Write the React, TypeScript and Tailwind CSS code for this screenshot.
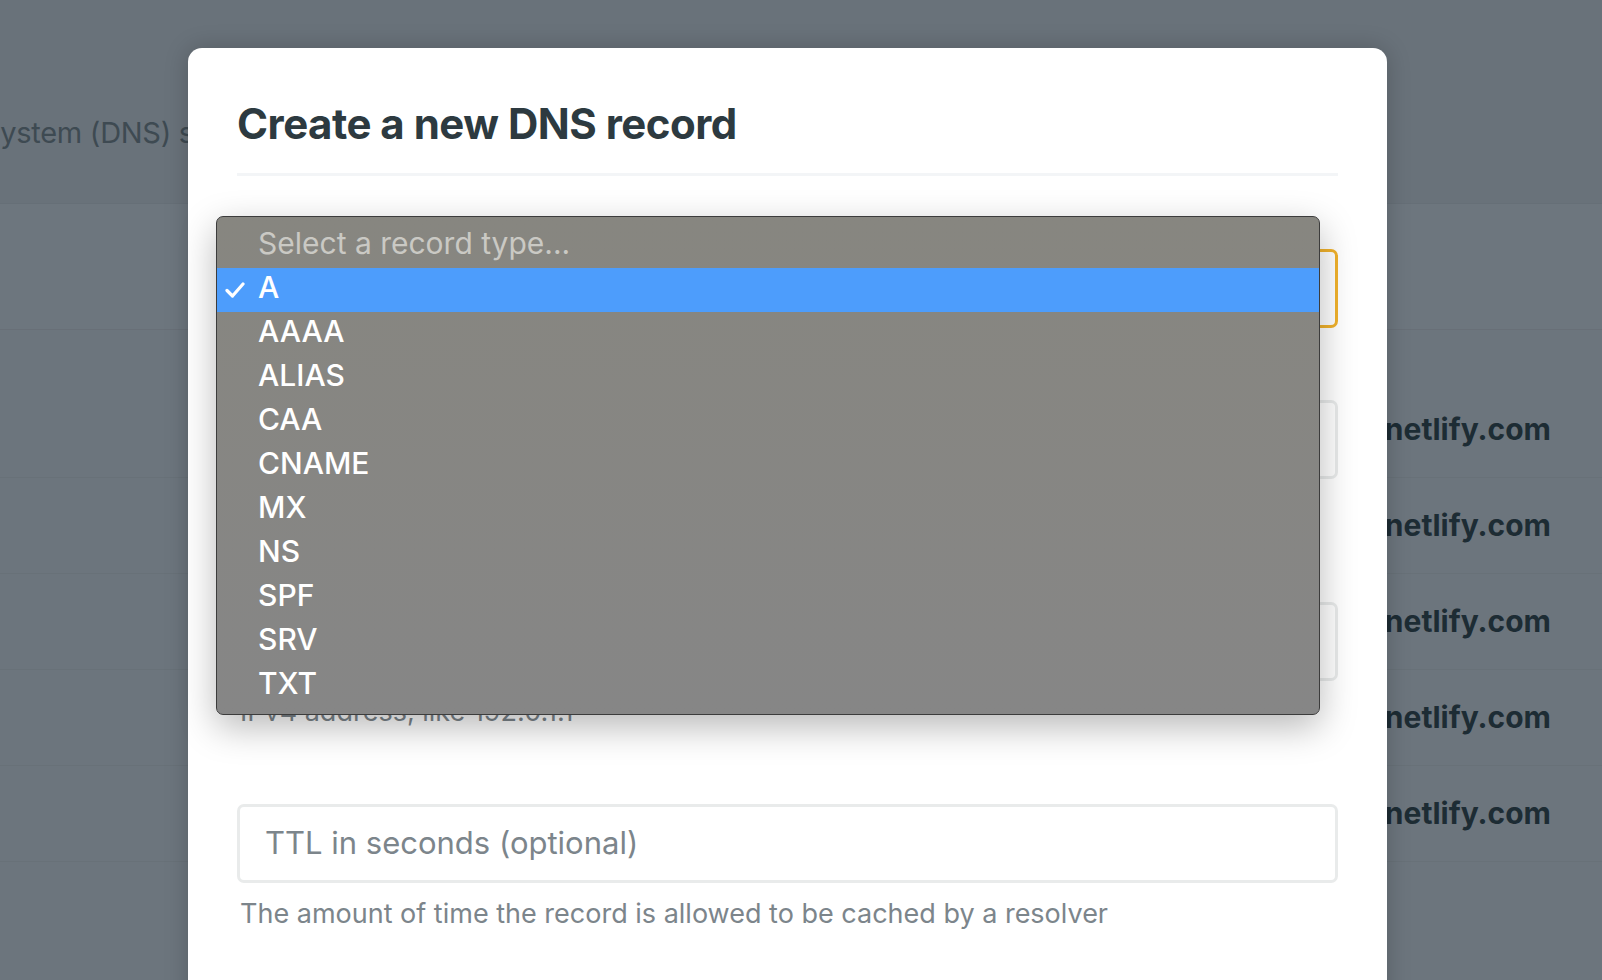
import React from "react";

const recordTypes = ["A", "AAAA", "ALIAS", "CAA", "CNAME", "MX", "NS", "SPF", "SRV", "TXT"];

const rows = [0, 1, 2, 3, 4];

function Check() {
  return (
    <svg width="20" height="16" viewBox="0 0 20 16" fill="none">
      <path d="M2 8.5 L7.5 14 L18 2" stroke="white" strokeWidth="3.2" strokeLinecap="round" strokeLinejoin="round" />
    </svg>
  );
}

function Field({
  placeholder,
  help,
  focused,
}: {
  placeholder: string;
  help?: string;
  focused?: boolean;
}) {
  return (
    <div>
      <div
        className={
          focused
            ? "h-[79px] rounded-[7px] border-[3px] border-[#f1b22c] bg-white flex items-center pl-[25px]"
            : "h-[79px] rounded-[7px] border-[3px] border-[#e9ebeb] bg-white flex items-center pl-[25px]"
        }
      >
        <span className="text-[31px] text-[#7c858b]">{placeholder}</span>
      </div>
      {help && (
        <p className="mt-[15px] pl-[3px] text-[27px] leading-[32px] text-[#7c858b]">{help}</p>
      )}
    </div>
  );
}

export default function App() {
  return (
    <div className="relative h-[980px] w-[1602px] overflow-hidden bg-[#6c757d] font-['Inter',sans-serif]">
      {/* page behind the overlay */}
      <div className="h-[203px] bg-[#69727a] pt-[114px]">
        <p className="-ml-[18px] text-[29px] leading-[38px] tracking-[-0.01em] text-[#3e4a52] whitespace-nowrap">
          System (DNS) settings for your domain are managed here.
        </p>
      </div>
      <div className="h-[126px] border-t border-[#666f77] bg-[#6d767e]" />
      <div className="border-t border-[#686f77] pt-[52px]">
        {rows.map((i) => (
          <div
            key={i}
            className="h-[96px] border-b border-[#687178] flex items-center justify-end pr-[51px]"
          >
            <span className="text-[30px] font-bold text-[#1d2c34]">
              wonderful-hopper-4a7c1e.netlify.com
            </span>
          </div>
        ))}
      </div>

      {/* modal */}
      <div className="absolute left-[188px] top-[48px] h-[980px] w-[1199px] rounded-[14px] bg-white px-[49px] shadow-[0_0_24px_rgba(0,0,0,0.2)]">
        <h1 className="pt-[50px] text-[42px] font-bold leading-[52px] tracking-[-0.012em] text-[#2d3a40]">
          Create a new DNS record
        </h1>
        <div className="mt-[23px] h-[3px] bg-[#f3f5f7]" />

        <div className="mt-[73px]">
          <div className="mb-[72px]">
            <Field placeholder="A" focused />
          </div>
          <div className="mb-[76px]">
            <Field placeholder="Name" help="Enter @ or leave blank to create a record for the root domain" />
          </div>
          <div className="mb-[76px]">
            <Field placeholder="Value" help="IPv4 address, like 192.0.1.1" />
          </div>
          <Field
            placeholder="TTL in seconds (optional)"
            help="The amount of time the record is allowed to be cached by a resolver"
          />
        </div>

        {/* native select popup */}
        <div className="absolute left-[28px] top-[168px] w-[1104px] rounded-[7px] border border-[#3c3c3c] bg-gradient-to-b from-[#878680] to-[#868686] pt-[7px] pb-[6px] shadow-[0_12px_36px_rgba(0,0,0,0.28)]">
          <div className="flex h-[44px] items-center pb-[6px] pl-[41px] text-[30px] text-[#cac9c4]">
            Select a record type...
          </div>
          {recordTypes.map((t) => (
            <div
              key={t}
              className={
                t === "A"
                  ? "relative flex h-[44px] items-center bg-[#4d9dfc] pb-[6px] pl-[41px] text-[30px] font-medium text-white"
                  : "relative flex h-[44px] items-center pb-[6px] pl-[41px] text-[30px] font-medium text-white"
              }
            >
              {t === "A" && (
                <span className="absolute left-[8px] top-[14px]">
                  <Check />
                </span>
              )}
              {t}
            </div>
          ))}
        </div>
      </div>
    </div>
  );
}
